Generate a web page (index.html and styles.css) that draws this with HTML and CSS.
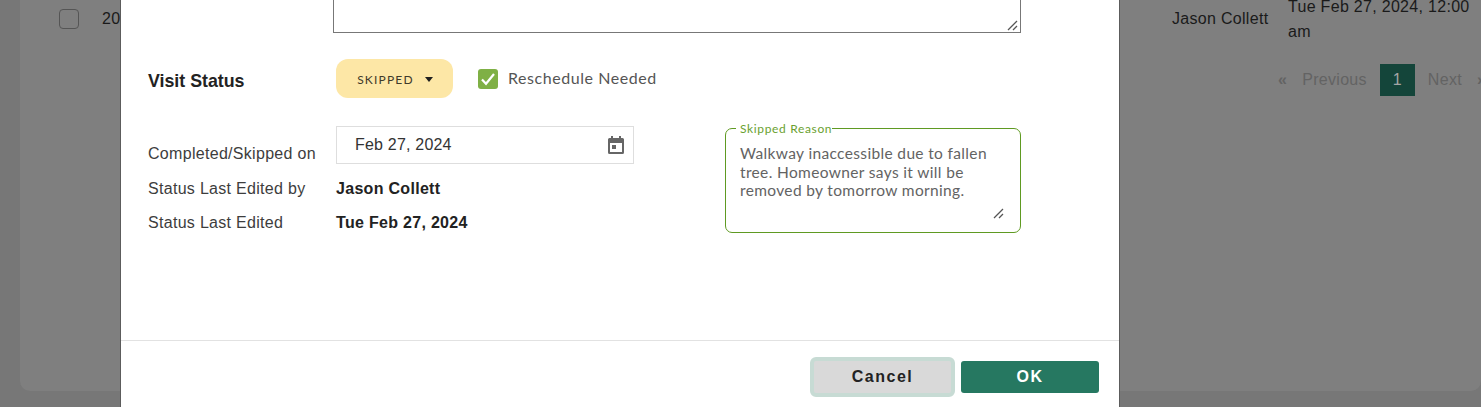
FILE: index.html
```html
<!DOCTYPE html>
<html lang="en">
<head>
<meta charset="utf-8">
<title>Visit Status</title>
<link rel="stylesheet" href="styles.css">
</head>
<body>
<div class="page">
  <div class="card">
    <div class="row">
      <span class="row-check"></span>
      <span class="row-id">20</span>
      <span class="row-name">Jason Collett</span>
      <span class="row-date">Tue Feb 27, 2024, 12:00 am</span>
    </div>
    <div class="pager">
      <span class="pg-arrow">«</span>
      <span class="pg-link pg-prev">Previous</span>
      <span class="pg-current">1</span>
      <span class="pg-link pg-next">Next</span>
      <span class="pg-arrow">»</span>
    </div>
  </div>
</div>
<div class="modal">
  <div class="modal-body">
    <div class="notes"><svg class="grip" viewBox="0 0 12 12"><path d="M1 11 10 2M6 11 10 7" stroke="#555" stroke-width="1.3" fill="none"/></svg></div>
    <div class="status-row">
      <div class="status-label">Visit Status</div>
      <button class="status-btn">SKIPPED<span class="caret"></span></button>
      <span class="check"><svg viewBox="0 0 20 20" width="20" height="20"><path d="M4 10.500 8 14.800 16 5" stroke="#fff" stroke-width="2.200" fill="none"/></svg></span>
      <span class="check-label">Reschedule Needed</span>
    </div>
    <div class="details">
      <div class="fields">
        <div class="field field-date">
          <span class="field-label">Completed/Skipped on</span>
          <div class="date-input">
            <span>Feb 27, 2024</span>
            <svg class="cal" viewBox="0 0 18 20" width="18" height="20"><path fill="#666" fill-rule="evenodd" d="M4 1h2v2h6V1h2v2h1.500A1.500 1.500 0 0 1 17 4.500V17.500A1.500 1.500 0 0 1 15.500 19H2.500A1.500 1.500 0 0 1 1 17.500V4.500A1.500 1.500 0 0 1 2.500 3H4zM3 8v9h12V8zM5 10h4v4H5z"/></svg>
          </div>
        </div>
        <div class="field field-by">
          <span class="field-label">Status Last Edited by</span>
          <span class="field-value">Jason Collett</span>
        </div>
        <div class="field field-on">
          <span class="field-label">Status Last Edited</span>
          <span class="field-value">Tue Feb 27, 2024</span>
        </div>
      </div>
      <fieldset class="reason">
        <legend>Skipped Reason</legend>
        <p>Walkway inaccessible due to fallen tree. Homeowner says it will be removed by tomorrow morning.</p>
        <svg class="grip" viewBox="0 0 12 12"><path d="M1 11 10 2M6 11 10 7" stroke="#555" stroke-width="1.3" fill="none"/></svg>
      </fieldset>
    </div>
  </div>
  <div class="modal-foot">
    <button class="btn btn-cancel">Cancel</button>
    <button class="btn btn-ok">OK</button>
  </div>
</div>
</body>
</html>
```

FILE: styles.css
```css
* { box-sizing: border-box; }
html, body { margin: 0; height: 407px; overflow: hidden; }
body { background: #777; font-family: "Liberation Sans", Arial, sans-serif; color: #222; position: relative; }

.page { height: 391px; padding-left: 20px; }
.card { height: 391px; background: #7f7f7f; border-radius: 0 0 10px 10px; position: relative; }
.row { display: flex; height: 38px; align-items: center; font-size: 16px; letter-spacing: .3px; color: #1a1a1a; }
.row-check { width: 20px; height: 20px; flex: none; margin-left: 39px; border: 1px solid #555; border-radius: 4px; }
.row-id { margin-left: 23px; width: 1070px; flex: none; }
.row-name { width: 116px; flex: none; }
.row-date { width: 190px; flex: none; line-height: 25px; }

.pager { display: flex; align-items: center; margin: 26px 0 0 1258px; height: 32px; font-size: 16px; letter-spacing: .3px; color: #636363; white-space: nowrap; width: 240px; }
.pg-arrow { font-weight: bold; flex: none; }
.pg-link { flex: none; }
.pg-prev { margin: 0 13px 0 15px; }
.pg-next { margin: 0 15px 0 13px; }
.pg-current { width: 35px; height: 32px; flex: none; background: #14453a; color: #a5a5a5; display: flex; align-items: center; justify-content: center; }

.modal { position: absolute; left: 120px; top: 0; width: 1000px; height: 407px; background: #fff; border-left: 1px solid #5c5c5c; border-right: 1px solid #5c5c5c; display: flex; flex-direction: column; }
.modal-body { height: 341px; flex: none; padding-left: 27px; border-bottom: 1px solid #e2e2e2; }

.notes { width: 688px; height: 33px; margin-left: 185px; border: 1px solid #777; border-top: 0; position: relative; }
.grip { position: absolute; right: 1px; bottom: 1px; width: 12px; height: 12px; }

.status-row { display: flex; align-items: center; margin-top: 26px; height: 39px; }
.status-label { width: 188px; font-size: 17.800px; font-weight: bold; color: #222; padding-top: 5px; }
.status-btn { width: 117px; height: 39px; background: #fde7a6; border: 0; border-radius: 12px; font: 12px "Lato", sans-serif; letter-spacing: 1.200px; color: #3f3a2a; padding: 1px 0 0 1px; display: flex; align-items: center; justify-content: center; }
.caret { width: 0; height: 0; margin-left: 11px; border: 4.500px solid transparent; border-top: 5px solid #1f1f1f; border-bottom: 0; }
.check { width: 20px; height: 20px; margin-left: 25px; background: #7fb045; border-radius: 3px; display: block; }
.check svg { display: block; }
.check-label { margin: 0 0 2px 10px; font: 16px "Lato", sans-serif; letter-spacing: .55px; color: #555; }

.details { display: flex; margin-top: 28px; }
.fields { width: 577px; }
.field { display: flex; font-size: 16px; letter-spacing: .3px; color: #3d3d3d; }
.field-label { width: 188px; flex: none; }
.field-date { height: 38px; }
.field-date .field-label { padding-top: 19px; }
.date-input { width: 298px; height: 38px; border: 1px solid #dedede; display: flex; align-items: center; justify-content: space-between; padding: 0 8px 0 18px; color: #333; font-size: 16px; letter-spacing: .2px; }
.cal { display: block; }
.field-by { margin-top: 16px; height: 18px; }
.field-on { margin-top: 16px; height: 18px; }
.field-value { font-weight: bold; color: #222; }

.reason { width: 296px; height: 112px; margin: -5px 0 0; padding: 0 14px; border: 1px solid #5f9a22; border-radius: 7px; position: relative; min-width: 0; }
.reason legend { font: 12px "Lato", sans-serif; letter-spacing: .65px; color: #6a9f30; padding: 0 0 0 4px; margin-left: -4px; }
.reason p { margin: 8px 0 0; font: 15.500px/18.500px "Lato", sans-serif; letter-spacing: .35px; color: #636363; }
.reason .grip { right: 15px; bottom: 13px; }

.modal-foot { flex: 1; display: flex; justify-content: flex-end; align-items: flex-start; padding: 16px 20px 0 0; gap: 6px; }
.btn { font: bold 16px "Liberation Sans", Arial, sans-serif; letter-spacing: 1.500px; border-radius: 3px; display: block; }
.btn-cancel { width: 145px; height: 40px; background: #d9d9d9; border: 4px solid #c7dbd4; border-radius: 6px; color: #222; }
.btn-ok { width: 138px; height: 32px; margin-top: 4px; background: #267861; border: 0; color: #fff; }
```
